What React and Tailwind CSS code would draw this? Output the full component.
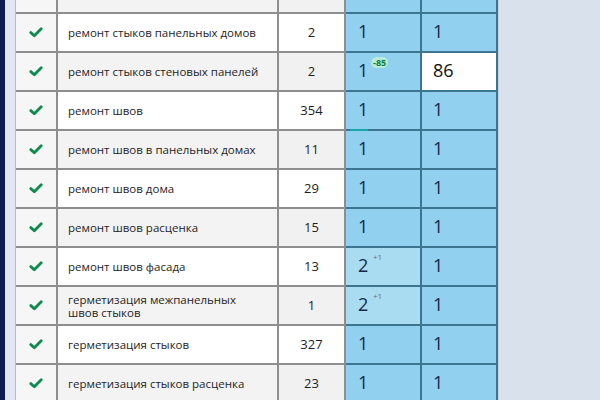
import React from 'react';

const rows = [
    { kw: 'ремонт стыков панельных домов', n: 2, a: '1', b: '1' },
    { kw: 'ремонт стыков стеновых панелей', n: 2, a: '1', b: '86', delta: '-85', white: true },
    { kw: 'ремонт швов', n: 354, a: '1', b: '1', bar: true },
    { kw: 'ремонт швов в панельных домах', n: 11, a: '1', b: '1' },
    { kw: 'ремонт швов дома', n: 29, a: '1', b: '1' },
    { kw: 'ремонт швов расценка', n: 15, a: '1', b: '1' },
    { kw: 'ремонт швов фасада', n: 13, a: '2', b: '1', plus: '+1' },
    { kw: 'герметизация межпанельных швов стыков', n: 1, a: '2', b: '1', plus: '+1' },
    { kw: 'герметизация стыков', n: 327, a: '1', b: '1' },
    { kw: 'герметизация стыков расценка', n: 23, a: '1', b: '1' },
];

function Check() {
    return (
        <svg width="14" height="11" viewBox="0 0 14 11">
            <polyline points="1.8,5.6 5.3,8.8 12.2,1.8" fill="none" stroke="#0e8a4c" strokeWidth="2.8" strokeLinecap="round" strokeLinejoin="round" />
        </svg>
    );
}

function Row({ row, idx }) {
    const gray = idx % 2 === 1;
    const lightA = !!row.plus;
    return (
        <div className="flex h-[39px] shrink-0">
            <div className="flex w-[42px] items-center justify-center border-b-2 border-r-2 border-[#8e8e8e] bg-[#f6f6f6]">
                <Check />
            </div>
            <div className={`flex w-[221px] items-center border-b-2 border-r-2 border-[#8e8e8e] pl-[10px] pr-2 text-[11.5px] leading-[13px] text-[#1e1e1e] ${gray ? 'bg-[#f3f3f3]' : 'bg-white'}`}>
                <span className={row.kw.length > 32 ? 'w-[175px]' : ''}>{row.kw}</span>
            </div>
            <div className={`flex w-[67px] items-center justify-center border-b-2 border-r-2 border-[#8e8e8e] text-[13px] text-[#1e1e1e] ${gray ? 'bg-[#f1f1f1]' : 'bg-white'}`}>
                {row.n}
            </div>
            <div className={`relative w-[76px] border-b-2 border-r-2 border-[#3b7590] pl-[12px] pt-[5px] ${lightA ? 'bg-[#a9dbf1]' : 'bg-[#91d0ee]'}`}>
                <span className="text-[18px] leading-[24px] text-[#15294a]">{row.a}</span>
                {row.delta && (
                    <span className="absolute left-[25px] top-[4px] rounded-full bg-[#b9ecd7] px-[2px] text-[9px] font-bold leading-[11px] text-[#0b7d43]">{row.delta}</span>
                )}
                {row.plus && (
                    <span className="absolute left-[27px] top-[4px] text-[8px] leading-[10px] text-[#6c6f80]">{row.plus}</span>
                )}
                {row.bar && <div className="absolute bottom-[-2px] left-[4px] h-[2px] w-[18px] bg-[#1aa5a8]" />}
            </div>
            <div className={`w-[76px] border-b-2 border-r-2 border-[#3b7590] pl-[11px] pt-[5px] ${row.white ? 'bg-white' : 'bg-[#91d0ee]'}`}>
                <span className={`text-[18px] leading-[24px] ${row.white ? 'text-[#111]' : 'text-[#15294a]'}`}>{row.b}</span>
            </div>
        </div>
    );
}

export default function App() {
    return (
        <div className="flex h-[400px] w-[600px] overflow-hidden bg-[#d9e2ec]" style={{ fontFamily: '"Open Sans", "Noto Sans", sans-serif' }}>
            <div className="w-[5px] shrink-0 bg-[#0c1b52]" />
            <div className="w-[11px] shrink-0 border-r border-[#b9bccb] bg-[#e3e6f3]" />
            <div className="flex w-[482px] shrink-0 flex-col">
                <div className="flex h-[14px] shrink-0">
                    <div className="w-[42px] border-b-2 border-r-2 border-[#8e8e8e] bg-[#f6f6f6]" />
                    <div className="w-[221px] border-b-2 border-r-2 border-[#8e8e8e] bg-[#f3f3f3]" />
                    <div className="w-[67px] border-b-2 border-r-2 border-[#8e8e8e] bg-[#f1f1f1]" />
                    <div className="w-[76px] border-b-2 border-r-2 border-[#3b7590] bg-[#91d0ee]" />
                    <div className="w-[76px] border-b-2 border-r-2 border-[#3b7590] bg-[#91d0ee]" />
                </div>
                {rows.map((row, i) => (
                    <Row key={i} row={row} idx={i} />
                ))}
            </div>
            <div className="flex-1 border-l border-[#c9d3df]" />
        </div>
    );
}
